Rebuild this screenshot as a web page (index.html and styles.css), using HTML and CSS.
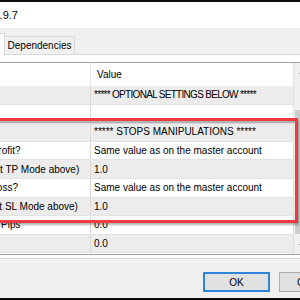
FILE: index.html
```html
<!DOCTYPE HTML>
<html>

<head>
  <meta charset="utf-8">
  <title>Copier 1.9.7</title>
  <link rel="stylesheet" href="styles.css">
</head>

<body>
  <div class="window">
    <div class="titlebar">Copier 1.9.7</div>

    <div class="tabs">
      <span class="tab">About</span>
      <span class="tab">Common</span>
      <span class="tab active">Inputs</span>
      <span class="tab">Dependencies</span>
    </div>

    <div class="page">
      <div class="list">
        <div class="grid">
          <div class="row head">
            <div class="cell">Variable</div>
            <div class="cell val">Value</div>
          </div>
          <div class="row odd">
            <div class="cell">Optional</div>
            <div class="cell val tight">***** OPTIONAL SETTINGS BELOW *****</div>
          </div>
          <div class="row">
            <div class="cell">Magic</div>
            <div class="cell val"></div>
          </div>
          <div class="row odd">
            <div class="cell">Stops</div>
            <div class="cell val">***** STOPS MANIPULATIONS *****</div>
          </div>
          <div class="row">
            <div class="cell">Follow Master's Take Profit?</div>
            <div class="cell val">Same value as on the master account</div>
          </div>
          <div class="row odd">
            <div class="cell">TP Multiplier (if Different TP Mode above)</div>
            <div class="cell val">1.0</div>
          </div>
          <div class="row">
            <div class="cell">Follow Master's Stop Loss?</div>
            <div class="cell val">Same value as on the master account</div>
          </div>
          <div class="row odd">
            <div class="cell">SL Multiplier (if Different SL Mode above)</div>
            <div class="cell val">1.0</div>
          </div>
          <div class="row">
            <div class="cell">Max Price Deviation, in Pips</div>
            <div class="cell val">0.0</div>
          </div>
          <div class="row odd">
            <div class="cell">Spread</div>
            <div class="cell val">0.0</div>
          </div>
        </div>

        <div class="scroll">
          <div class="arrow">
            <svg width="7" height="4" viewBox="0 0 7 4"><path d="M0.5 3.5 L3.5 0.5 L6.5 3.5" fill="none" stroke="#606060" /></svg>
          </div>
          <div class="track">
            <div class="thumb"></div>
          </div>
          <div class="arrow">
            <svg width="7" height="4" viewBox="0 0 7 4"><path d="M0.5 0.5 L3.5 3.5 L6.5 0.5" fill="none" stroke="#606060" /></svg>
          </div>
        </div>
      </div>
    </div>

    <div class="buttons">
      <button class="btn default">OK</button>
      <button class="btn">Cancel</button>
    </div>

    <!-- red annotation frame -->
    <div class="mark"></div>
  </div>
</body>

</html>
```

FILE: styles.css
```css
* {
  margin: 0;
  padding: 0;
  box-sizing: border-box;
}

body {
  background: #0b0e0b;
  overflow: hidden;
  font-family: "Liberation Sans", Arial, sans-serif;
  font-size: 10px;
  color: #000;
}

.window {
  position: relative;
  width: 480px;
  height: 296px;
  margin: 2px 0 0 -120px;
  background: #f0f0f0;
  display: flex;
  flex-direction: column;
}

.titlebar {
  height: 26px;
  background: #fff;
  padding-left: 78px;
  font-size: 11px;
  line-height: 27px;
}

.tabs {
  height: 26px;
  padding-left: 4px;
  display: flex;
  align-items: flex-end;
}

.tab {
  height: 18px;
  margin-right: -1px;
  border: 1px solid #d9d9d9;
  border-bottom: none;
  background: #f0f0f0;
  line-height: 17px;
  text-align: center;
  width: 40px;
}

.tab:nth-child(2) {
  width: 43px;
}

.tab:last-child {
  width: 71px;
}

.tab.active {
  height: 22px;
  margin-bottom: -1px;
  background: #fff;
  position: relative;
  z-index: 1;
}

.page {
  margin: 0 3px;
  border: 1px solid #d9d9d9;
  background: #fff;
  padding: 7px 6px 3px;
}

.list {
  width: 421px;
  border: 1px solid #a0a0a0;
  display: flex;
}

.grid {
  flex: 1;
}

.row {
  display: grid;
  grid-template-columns: 199px 1fr;
  height: 18.6px;
  border-bottom: 1px solid #e2e2e2;
  background: #fff;
}

.row.odd {
  background: #ececec;
}

.row.head {
  height: 23px;
  border-bottom: none;
}

.cell {
  padding-left: 5px;
  white-space: nowrap;
  overflow: hidden;
  display: flex;
  align-items: center;
}

.cell.val {
  padding-left: 3px;
  border-left: 1px solid #d9d9d9;
}

.cell.tight {
  letter-spacing: -0.7px;
}

.head .cell.val {
  padding-left: 6px;
  border-left-color: #e5e5e5;
}

.scroll {
  width: 17px;
  background: #f0f0f0;
  border-left: 1px solid #e0e0e0;
  display: flex;
  flex-direction: column;
}

.arrow {
  height: 17px;
  display: flex;
  align-items: center;
  justify-content: center;
}

.track {
  flex: 1;
  padding: 30px 1px 3px;
}

.thumb {
  height: 124px;
  background: #cdcdcd;
}

.buttons {
  flex: 1;
  display: flex;
  justify-content: flex-end;
  align-items: flex-start;
  gap: 9px;
  padding: 13px 14px 0 0;
}

.btn {
  width: 67px;
  height: 20px;
  background: #e1e1e1;
  border: 1px solid #adadad;
  font-family: "Liberation Sans", Arial, sans-serif;
  font-size: 10px;
  color: #000;
}

.btn.default {
  border: 2px solid #2f86d8;
}

.mark {
  position: absolute;
  left: 100px;
  top: 116px;
  width: 318px;
  height: 105px;
  border: 3px solid #ee3b3f;
  box-shadow: 1px 2px 2px rgba(0, 0, 0, 0.3), inset 1px 2px 2px rgba(0, 0, 0, 0.3);
}
```
